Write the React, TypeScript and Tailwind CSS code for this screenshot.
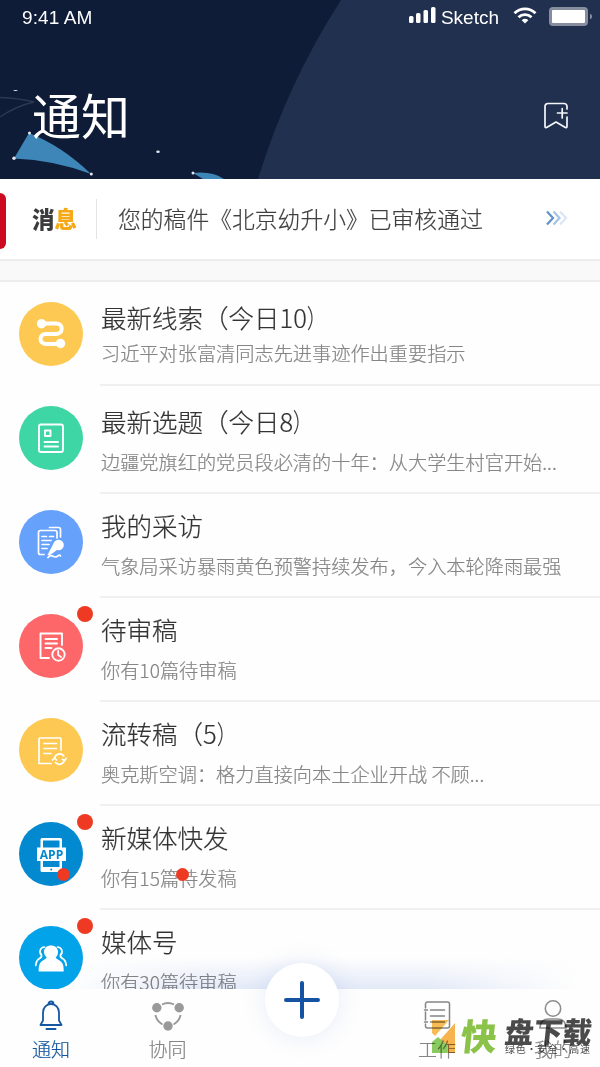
import type { ReactNode } from "react";

type Feed = {
  title: string;
  text: string;
  color: string;
  icon: ReactNode;
  dot?: boolean;
};

const stroke = { fill: "none", stroke: "currentColor", strokeLinecap: "round", strokeLinejoin: "round" } as const;

const RouteIcon = () => (
  <svg viewBox="0 0 64 64" className="w-16 h-16">
    <g {...stroke} strokeWidth="4">
      <path d="M23 21.500h14.500a5.200 5.200 0 0 1 0 10.400H26.500a5 5 0 0 0 0 10h14" />
    </g>
    <circle cx="22.500" cy="21.700" r="4.700" fill="currentColor" />
    <circle cx="41.500" cy="41.500" r="4.700" fill="currentColor" />
  </svg>
);

const TopicIcon = () => (
  <svg viewBox="0 0 64 64" className="w-16 h-16">
    <g {...stroke} strokeWidth="1.900">
      <rect x="20" y="18.500" width="24" height="27.500" rx="2" />
      <rect x="26" y="24.500" width="5.500" height="5.500" />
      <path d="M25.500 36h13.500M25.500 40.500h13.500" />
    </g>
  </svg>
);

const InterviewIcon = () => (
  <svg viewBox="0 0 64 64" className="w-16 h-16">
    <g {...stroke} strokeWidth="1.700">
      <path d="M38 28v-5.500a2 2 0 0 0-2-2H21.500a2 2 0 0 0-2 2v20a2 2 0 0 0 2 2H25" />
      <path d="M30.500 17.500h9a2 2 0 0 1 2 2V27" />
      <path d="M23 26.500h4.500M30.500 26.500h4M23 30.500h9M23 34.500h7M23 38.500h5" />
      <path d="M29 47.500c3.500-5 5.500 1.500 9-1 2-1.500 2.500-2 3.500-.5" />
    </g>
    <path d="M28.500 45l6-11.500 5.500 5-9.500 7z" fill="currentColor" />
    <circle cx="39.500" cy="35" r="5.300" fill="currentColor" />
  </svg>
);

const PendingIcon = () => (
  <svg viewBox="0 0 64 64" className="w-16 h-16">
    <g {...stroke} strokeWidth="1.900">
      <path d="M43 31V19.500H21.500V44H30" />
      <path d="M26.500 25h11.500M26.500 29.500h11.500M26.500 34h6" />
      <circle cx="39.500" cy="40.500" r="6.200" />
      <path d="M39.200 37v4l2.800 2" />
    </g>
  </svg>
);

const TransferIcon = () => (
  <svg viewBox="0 0 64 64" className="w-16 h-16">
    <g {...stroke} strokeWidth="1.700">
      <path d="M42 32V21a1 1 0 0 0-1-1H21a1 1 0 0 0-1 1v24.500h12" />
      <path d="M25 25.500h12.500M25 30.500h12.500M25 35.500h7" />
      <path d="M35.500 40.500a5.200 5.200 0 0 1 9.300-2.500M45.500 42a5.200 5.200 0 0 1-9 2.500" />
      <path d="M33.500 42l2-2 2 2M43.500 41.500l2 1 1.700-2" />
    </g>
  </svg>
);

const AppIcon = () => (
  <svg viewBox="0 0 64 64" className="w-16 h-16">
    <path d="M23 16h18.500a1.500 1.500 0 0 1 1.500 1.500v31a1.500 1.500 0 0 1-1.500 1.500H23a1.500 1.500 0 0 1-1.500-1.500v-31A1.500 1.500 0 0 1 23 16z" fill="currentColor" />
    <rect x="24" y="18.500" width="16.500" height="26.500" fill="#0389cf" />
    <rect x="18" y="25.500" width="29" height="13.500" fill="currentColor" />
    <circle cx="32.200" cy="47.500" r="1" fill="#0389cf" />
    <text x="32.500" y="36.700" textAnchor="middle" fontSize="12" fontWeight="700" fontFamily="Open Sans" fill="#0389cf">
      APP
    </text>
  </svg>
);

const GroupIcon = () => (
  <svg viewBox="0 0 64 64" className="w-16 h-16">
    <g {...stroke} strokeWidth="1.700">
      <path d="M25.500 21a4.600 4.600 0 0 0-3 8c.7 1.500-.5 2.500-2 3.500-2.300 1.300-3.500 3-3.700 7" />
      <path d="M38.500 21a4.600 4.600 0 0 1 3 8c-.7 1.500.5 2.500 2 3.500 2.300 1.300 3.500 3 3.700 7" />
    </g>
    <path d="M32 19.500c4.200 0 7 2.600 7 6.300 0 2.400-.8 4.200-2.200 5.500.2 1.300 1.500 2 3.300 3 3.200 1.800 4.800 4.300 4.600 11.300H19.700c-.2-7 1.400-9.500 4.600-11.300 1.800-1 3.100-1.700 3.300-3-1.400-1.300-2.600-3.100-2.600-5.500 0-3.700 2.800-6.300 7-6.300z" fill="currentColor" />
  </svg>
);

const feeds: Feed[] = [
  { title: "最新线索（今日10）", text: "习近平对张富清同志先进事迹作出重要指示", color: "bg-[#fdc952]", icon: <RouteIcon /> },
  { title: "最新选题（今日8）", text: "边疆党旗红的党员段必清的十年：从大学生村官开始...", color: "bg-[#3fd6a5]", icon: <TopicIcon /> },
  { title: "我的采访", text: "气象局采访暴雨黄色预警持续发布，今入本轮降雨最强", color: "bg-[#66a1fc]", icon: <InterviewIcon /> },
  { title: "待审稿", text: "你有10篇待审稿", color: "bg-[#fd6769]", icon: <PendingIcon />, dot: true },
  { title: "流转稿（5）", text: "奥克斯空调：格力直接向本土企业开战 不顾...", color: "bg-[#fdc952]", icon: <TransferIcon /> },
  { title: "新媒体快发", text: "你有15篇待发稿", color: "bg-[#0389cf]", icon: <AppIcon />, dot: true },
  { title: "媒体号", text: "你有30篇待审稿", color: "bg-[#03a3e9]", icon: <GroupIcon />, dot: true },
];

function StatusBar() {
  return (
    <div className="flex h-9 items-center pl-[22px] pr-2 font-['Liberation_Sans',sans-serif] text-white">
      <span className="text-[19px] tracking-[0.1px]">9:41 AM</span>
      <svg viewBox="0 0 27 17" className="ml-auto mb-1.5 w-[27px] h-[17px]" fill="#fff">
        <rect x="0" y="9" width="4.500" height="7" rx="1.500" />
        <rect x="7" y="6" width="4.500" height="10" rx="1.500" />
        <rect x="14.500" y="3" width="4.500" height="13" rx="1.500" />
        <rect x="22" y="0" width="4.500" height="16" rx="1.500" />
      </svg>
      <span className="ml-[5px] text-[19px]">Sketch</span>
      <svg viewBox="0 0 24 17" className="ml-[14px] mb-1.5 w-6 h-[17px]" fill="none" stroke="#fff" strokeWidth="2.800">
        <path d="M1.500 6.200a15 15 0 0 1 21 0" />
        <path d="M5.500 10.300a9.300 9.300 0 0 1 13 0" />
        <path d="M12 16.500l-3.300-3.300a4.700 4.700 0 0 1 6.600 0z" fill="#fff" stroke="none" />
      </svg>
      <div className="ml-3 mb-1 h-[19px] w-[39px] rounded-[4px] border-[3px] border-[#858d9e] bg-white" />
      <div className="ml-0.5 mb-1 h-[5px] w-[2px] rounded-r-full bg-[#858d9e]" />
    </div>
  );
}

function Header() {
  return (
    <header className="relative h-[179px] overflow-hidden bg-[#0f1c38]">
      <svg viewBox="0 0 600 179" className="absolute inset-0 w-full h-full">
        <path d="M341 0Q287 84 258 179H600V0z" fill="#22304f" />
        <path d="M0 97.500Q18 98 34 102Q16 106 0 117" fill="none" stroke="#2b3954" strokeWidth="1.300" />
        <path d="M29 133Q62 146 91 174Q54 160 14 158.500z" fill="#3d86b7" />
        <path d="M193 173Q212 171 224 179H203z" fill="#3d86b7" />
        <g fill="#dfe6ee">
          <circle cx="29.500" cy="133" r="1.500" />
          <circle cx="14" cy="158.300" r="1.700" />
          <circle cx="91.300" cy="174" r="1.500" />
          <ellipse cx="158" cy="151.700" rx="1.800" ry="1.200" />
          <circle cx="193" cy="173" r="1.500" />
          <ellipse cx="15.500" cy="90.500" rx="2.200" ry=".6" />
        </g>
      </svg>
      <div className="relative">
        <StatusBar />
        <div className="flex items-center justify-between pl-8 pr-[31px] pt-[42px]">
          <h1 className="text-[49px] leading-[72px] text-white">通知</h1>
          <svg viewBox="0 0 26 28" className="w-[26px] h-7 mt-1" fill="none" stroke="#f4f6f9" strokeWidth="1.700" strokeLinecap="round" strokeLinejoin="round">
            <path d="M24 7V4.500A3 3 0 0 0 21 1.500H5A3 3 0 0 0 2 4.500V24.500a1 1 0 0 0 1.600.9L13 20l9.400 5.400a1 1 0 0 0 1.600-.9V15" />
            <path d="M14.500 11H24M19.200 6.500v9.500" />
          </svg>
        </div>
      </div>
    </header>
  );
}

function Notice() {
  return (
    <div className="flex h-20 items-center bg-white">
      <div className="mt-[3px] h-14 w-[6px] rounded-r-[6px] bg-[#cc0a20]" />
      <div className="ml-[26px] w-[65px] border-r border-[#e4e4e4] text-[22.500px] font-black leading-[40px] text-[#3c3c3c]">
        <span className="relative -top-px">
          消<span className="text-[#f5a916]">息</span>
        </span>
      </div>
      <p className="ml-[21px] text-[22.800px] leading-[34px] font-light text-[#3f3f3f] [-webkit-text-stroke:0.2px]">
        您的稿件《北京幼升小》已审核通过
      </p>
      <svg viewBox="0 0 22 16" className="ml-auto mr-8 mt-[-2px] w-[22px] h-4" fill="none" strokeWidth="2.200">
        <path d="M1 1.500L7 8l-6 6.500" stroke="#5e92cc" />
        <path d="M7.500 1.500L13.500 8l-6 6.500" stroke="#a4c3e6" />
        <path d="M14 1.500L20 8l-6 6.500" stroke="#dbe5f2" />
      </svg>
    </div>
  );
}

// the closing full-width bracket is narrowed so it sits close to the digits
function FeedTitle({ title }: { title: string }) {
  if (!title.endsWith("）")) return <>{title}</>;
  return (
    <>
      {title.slice(0, -1)}
      <span className="inline-block origin-left scale-x-75">）</span>
    </>
  );
}

function FeedRow({ feed, first }: { feed: Feed; first: boolean }) {
  return (
    <li className="flex h-[104px] pl-[19px]">
      <div className={`relative mt-5 h-16 w-16 shrink-0 rounded-full text-white ${feed.color}`}>
        {feed.icon}
        {feed.dot && <span className="absolute -top-2 -right-[10px] h-4 w-4 rounded-full bg-[#ee3a22]" />}
      </div>
      <div className={`ml-[17px] flex-1 border-b-2 border-[#f0f0f0] pl-px whitespace-nowrap ${first ? "h-[104px]" : "h-[108px]"}`}>
        <h2 className="pt-4 text-[25.500px] leading-[38px] font-light text-[#333]">
          <FeedTitle title={feed.title} />
        </h2>
        <p className={`text-[19.200px] leading-7 font-light text-[#858585] ${first ? "mt-[3px]" : "mt-2"}`}>{feed.text}</p>
      </div>
    </li>
  );
}

function TabBar() {
  return (
    <nav className="absolute inset-x-0 bottom-0 h-[78px]">
      <div className="absolute inset-0 bg-[#fefefe]" />
      <div className="relative flex h-full text-[19px] leading-7 font-light text-[#858585] [-webkit-text-stroke:0.2px]">
        <div className="flex w-[102px] flex-col items-center pt-[11px] text-[#1557a0]">
          <svg viewBox="0 0 24 32" className="w-6 h-8" fill="none" stroke="currentColor" strokeWidth="1.800" strokeLinecap="round" strokeLinejoin="round">
            <path d="M9.500 4a2.500 2.500 0 0 1 5 0M4 12.500a8 8.500 0 0 1 16 0v8L22.500 25h-21L4 20.500z" />
            <path d="M7.500 29h9" strokeWidth="2" />
          </svg>
          <span className="mt-[3px]">通知</span>
        </div>
        <div className="flex w-[131px] flex-col items-center pt-[11px]">
          <svg viewBox="0 0 34 32" className="w-[34px] h-8" fill="none" stroke="#999" strokeWidth="1.900">
            <g fill="#999" stroke="none">
              <circle cx="5.800" cy="7.800" r="4.700" />
              <circle cx="28.200" cy="7.800" r="4.700" />
              <circle cx="17" cy="26" r="4.700" />
            </g>
            <path d="M11 4.500q6-3 12 0M4.500 15q1 6 7 9.500M29.500 15q-1 6-7 9.500" />
          </svg>
          <span className="mt-[3px]">协同</span>
        </div>
        <div className="ml-[138px] flex w-[132px] flex-col items-center pt-[11px]">
          <svg viewBox="0 0 28 32" className="w-7 h-8" fill="none" stroke="#858585" strokeWidth="1.500" strokeLinecap="round">
            <path d="M2.500 8V4a2 2 0 0 1 2-2h20a2 2 0 0 1 2 2v22a2 2 0 0 1-2 2h-20a2 2 0 0 1-2-2v-2M2.500 12v8M1.500 10h3M1.500 22h3M7.500 10h14M7.500 16h14M7.500 22h14" />
          </svg>
          <span className="mt-[3px]">工作</span>
        </div>
        <div className="flex w-[97px] flex-col items-center pl-[3px] pt-[10px]">
          <svg viewBox="0 0 34 32" className="w-[34px] h-8" fill="none" stroke="#8e8e8e" strokeWidth="1.600" strokeLinecap="round">
            <circle cx="17" cy="9.500" r="7.700" />
            <path d="M4 29q0-9 9-9h8q9 0 9 9z" />
          </svg>
          <span className="mt-1">我的</span>
        </div>
      </div>
      <button className="absolute left-[265px] -top-[26px] flex h-[74px] w-[74px] items-center justify-center rounded-full bg-white shadow-[0_0_24px_rgba(66,110,190,0.13)]">
        <svg viewBox="0 0 36 38" className="w-9 h-[38px]" stroke="#1553a2" strokeWidth="4" strokeLinecap="round">
          <path d="M2 19h32M18 2v34" />
        </svg>
      </button>
    </nav>
  );
}

function Watermark() {
  return (
    <div className="absolute left-[429px] top-[1016px] flex h-10 w-[170px] font-black mix-blend-multiply">
      <svg viewBox="0 0 28 38" className="mt-1 w-7 h-[38px]">
        <path d="M3 0h17L6 16l-3-3z" fill="#f8bd55" />
        <path d="M26 3v30h-8v-9h-5l-2-4z" fill="#f8b44e" />
        <path d="M3 33V22l6-5 9 8v8z" fill="#8bcb5f" />
      </svg>
      <span className="ml-1 -mt-0.5 -skew-x-6 text-[36px] leading-[40px] text-[#8bc34a]">快</span>
      <div className="ml-[8px] whitespace-nowrap">
        <div className="-mt-px -skew-x-6 text-[29px] leading-[30px] text-[#4a4a4a]">盘下载</div>
        <div className="-mt-px text-[10px] leading-[10px] font-normal tracking-[0.700px] text-[#4a4a4a]">绿色·安全·高速</div>
      </div>
    </div>
  );
}

export default function App() {
  return (
    <div className="relative h-[1067px] w-[600px] overflow-hidden bg-[#fefefe] font-['Noto_Sans_CJK_SC',sans-serif]">
      <Header />
      <Notice />
      <div className="h-[23px] border-y-2 border-[#ededed] bg-[#f9f9f9]" />
      <ul className="[-webkit-text-stroke:0.2px]">
        {feeds.map((feed, i) => (
          <FeedRow key={feed.title} feed={feed} first={i === 0} />
        ))}
      </ul>
      {/* stray unread marks */}
      <span className="absolute left-[57px] top-[868px] h-[13px] w-[13px] rounded-full bg-[#ee3a22]" />
      <span className="absolute left-[176px] top-[868px] h-[13px] w-[13px] rounded-full bg-[#ee3a22]" />
      {/* glow above the tab bar */}
      <div className="absolute left-[70px] right-5 bottom-[78px] h-8 bg-gradient-to-t from-[#e3eaf8] to-transparent mix-blend-multiply [mask-image:linear-gradient(to_right,transparent,black_25%,black_70%,transparent)]" />
      <TabBar />
      <Watermark />
    </div>
  );
}
